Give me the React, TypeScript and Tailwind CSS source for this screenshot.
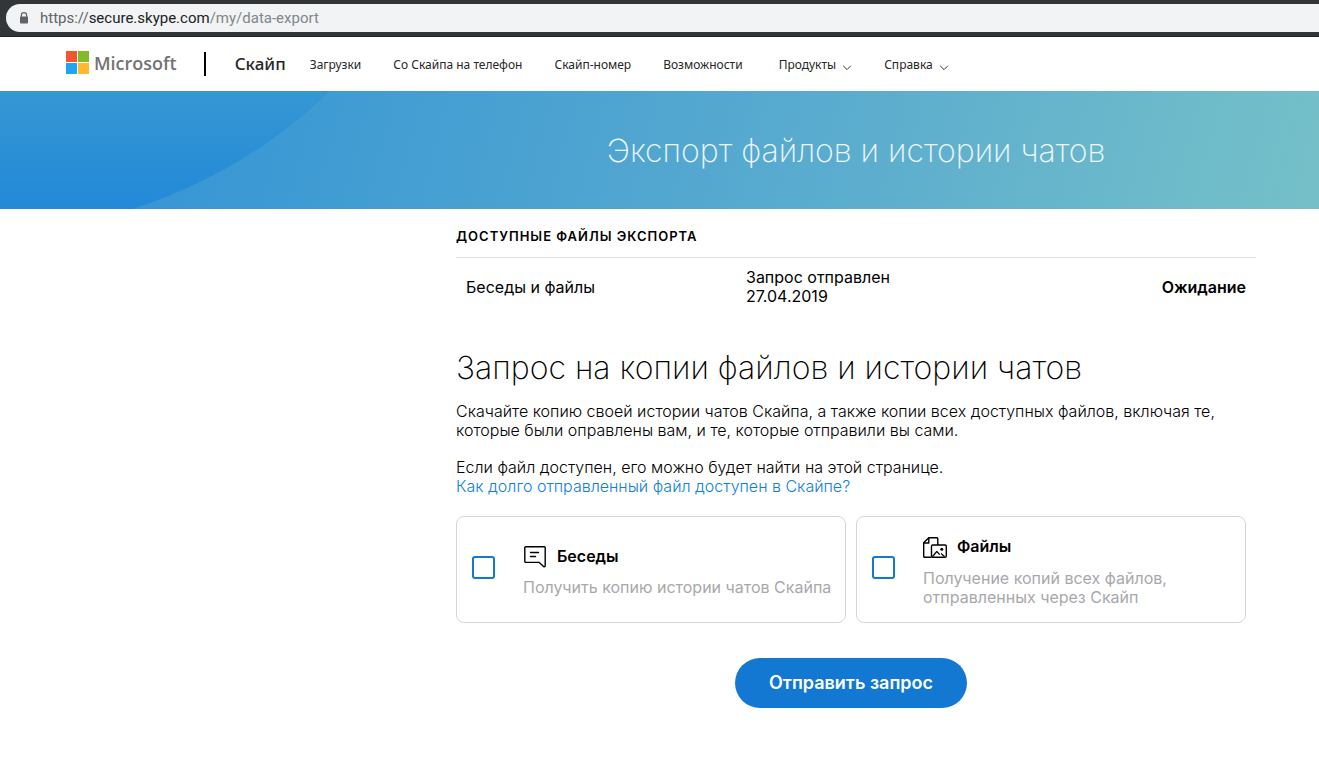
import { useState } from "react";

const NAV_LINKS = ["Загрузки", "Со Скайпа на телефон", "Скайп-номер", "Возможности"];
const NAV_MENUS = ["Продукты", "Справка"];

function LockIcon() {
  return (
    <svg viewBox="0 0 10 12" className="h-3 w-[10px]" aria-hidden="true">
      <path d="M2.4 5V3.3a2.6 2.6 0 0 1 5.2 0V5" fill="none" stroke="#5f6368" strokeWidth="1.2" />
      <rect x="1" y="4.5" width="8" height="7" rx="0.8" fill="#5f6368" />
    </svg>
  );
}

function MicrosoftLogo() {
  return (
    <svg viewBox="0 0 23 23" className="size-[23px]" aria-hidden="true">
      <path fill="#f25530" d="M0 0h11v11H0z" />
      <path fill="#84b927" d="M12 0h11v11H12z" />
      <path fill="#20a6ee" d="M0 12h11v11H0z" />
      <path fill="#ffb930" d="M12 12h11v11H12z" />
    </svg>
  );
}

function Chevron() {
  return (
    <svg viewBox="0 0 10 6" className="mt-[6px] h-[6px] w-[10px]" fill="none" stroke="#333" aria-hidden="true">
      <path d="M1.2 0.8 5 4.6 8.8 0.8" />
    </svg>
  );
}

function ChatIcon() {
  return (
    <svg viewBox="0 0 24 24" className="size-6" fill="none" stroke="#000" strokeWidth="1.4" strokeLinejoin="round" strokeLinecap="round" aria-hidden="true">
      <path d="M2.7 2.7h18.6a.9.9 0 0 1 .9.9v18.2c0 .9-.9 1.3-1.6.6L16.2 18.4H2.7a.9.9 0 0 1-.9-.9V3.6a.9.9 0 0 1 .9-.9z" />
      <path d="M7.500 8.500h8M7.500 12.500h5" />
    </svg>
  );
}

function FilesIcon() {
  return (
    <svg viewBox="0 0 24 24" className="size-6" fill="none" stroke="#000" strokeWidth="1.4" strokeLinejoin="round" aria-hidden="true">
      <path d="M8.5 22.3H1.7a1 1 0 0 1-1-1V7.800L5.800 2.700h8a1 1 0 0 1 1 1V10" />
      <path d="M.9 8h4.900V2.700" />
      <rect x="8.5" y="10" width="14.8" height="12.3" rx="1.2" />
      <path d="m9.500 21.500 4.300-5 2.900 3.200M18 18.500l3.500 3" strokeWidth="1.2" />
      <circle cx="18.800" cy="14.200" r="1.5" fill="#000" stroke="none" />
    </svg>
  );
}

const OPTIONS = [
  { id: "chats", title: "Беседы", text: "Получить копию истории чатов Скайпа", Icon: ChatIcon },
  { id: "files", title: "Файлы", text: "Получение копий всех файлов, отправленных через Скайп", Icon: FilesIcon },
];

export default function App() {
  const [selected, setSelected] = useState<string[]>([]);

  const toggle = (id: string) => {
    setSelected((prev) => (prev.includes(id) ? prev.filter((x) => x !== id) : [...prev, id]));
  };

  return (
    <div className="min-h-screen bg-white font-['Inter',sans-serif] text-black">
      {/* Address bar */}
      <div className="border-b border-[#202528] bg-[#323639] pt-1 pb-1 pl-[6px]">
        <div className="flex h-7 items-center gap-[11px] rounded-l-full bg-[#f1f3f4] pl-[13px] font-['Roboto',sans-serif] text-[15px] text-[#80868b]">
          <LockIcon />
          <span>
            <span className="text-[#5f6368]">https://</span>
            <span className="text-[#202124]">secure.skype.com</span>/my/data-export
          </span>
        </div>
      </div>

      {/* Site header */}
      <header className="flex h-[54px] items-center pl-[66px] font-['Noto_Sans',sans-serif] text-[#262626]">
        <a href="#" className="flex items-center gap-[5px] pb-[3px] font-['Open_Sans',sans-serif] text-lg font-semibold text-[#737373]">
          <MicrosoftLogo />
          Microsoft
        </a>
        <span className="ml-[27px] h-6 w-[2px] bg-black" />
        <a href="#" className="ml-[29px] text-[17px] font-medium">Скайп</a>
        <nav className="ml-6 flex items-center gap-8 pt-[2px] text-xs">
          {NAV_LINKS.map((label) => (
            <a key={label} href="#">{label}</a>
          ))}
          {NAV_MENUS.map((label) => (
            <button key={label} type="button" className="flex items-center gap-[6px] first-of-type:ml-1">
              {label}
              <Chevron />
            </button>
          ))}
        </nav>
      </header>

      {/* Banner */}
      <div className="relative h-[118px] overflow-hidden bg-linear-[105deg,#2e90d6,#5aaccf_62%,#75c0c8]">
        <svg viewBox="0 0 330 118" className="absolute top-0 left-0 h-full" aria-hidden="true">
          <defs>
            <linearGradient id="wave" x1="0" y1="0" x2="0" y2="1">
              <stop offset="0" stopColor="#3697d3" />
              <stop offset="1" stopColor="#2389d8" />
            </linearGradient>
          </defs>
          <path d="M0 0h330Q248 80 133 118H0z" fill="url(#wave)" />
        </svg>
        <h1 className="relative mr-[63px] ml-[456px] max-w-[800px] pt-9 text-center text-[32px] leading-[48px] font-extralight text-white/90">
          Экспорт файлов и истории чатов
        </h1>
      </div>

      <main className="mr-[63px] ml-[456px] max-w-[800px] text-base leading-[19px]">
        <h2 className="border-b border-[#e3e3e5] pt-[18px] pb-[11px] text-[13px] leading-[19px] font-semibold tracking-[1px] uppercase">
          Доступные файлы экспорта
        </h2>
        <table className="w-full table-fixed">
          <tbody>
            <tr>
              <td className="w-[280px] p-[10px]">Беседы и файлы</td>
              <td className="p-[10px]">
                Запрос отправлен
                <br />
                27.04.2019
              </td>
              <td className="p-[10px] text-right font-semibold">Ожидание</td>
            </tr>
          </tbody>
        </table>

        <h2 className="mt-7 text-[32px] leading-[48px] font-extralight">Запрос на копии файлов и истории чатов</h2>
        <p className="mt-[10px] font-light">
          Скачайте копию своей истории чатов Скайпа, а также копии всех доступных файлов, включая те, которые были
          оправлены вам, и те, которые отправили вы сами.
        </p>
        <p className="mt-[18px] font-light">Если файл доступен, его можно будет найти на этой странице.</p>
        <a href="#" className="font-light text-[#0f80dd]">Как долго отправленный файл доступен в Скайпе?</a>

        <div className="mt-5 mr-[10px] grid grid-cols-2 gap-[10px]">
          {OPTIONS.map(({ id, title, text, Icon }) => (
            <label key={id} className="flex h-[107px] items-center rounded-lg border border-[#d6d6d8] pl-[15px]">
              <input
                type="checkbox"
                checked={selected.includes(id)}
                onChange={() => toggle(id)}
                className="mr-7 mb-1 size-[23px] shrink-0 appearance-none rounded-[3px] border-2 border-[#1278d2] checked:bg-[#1278d2]"
              />
              <span className="pt-[2px]">
                <span className="flex items-center gap-[10px] font-semibold">
                  <Icon />
                  {title}
                </span>
                <span className="mt-[10px] block text-[#a8a8ab]">{text}</span>
              </span>
            </label>
          ))}
        </div>

        <div className="mt-[35px] mr-[10px] flex justify-center">
          <button type="button" className="h-[50px] rounded-full bg-[#1278d2] px-[34px] text-lg font-semibold text-white">
            Отправить запрос
          </button>
        </div>
      </main>
    </div>
  );
}
